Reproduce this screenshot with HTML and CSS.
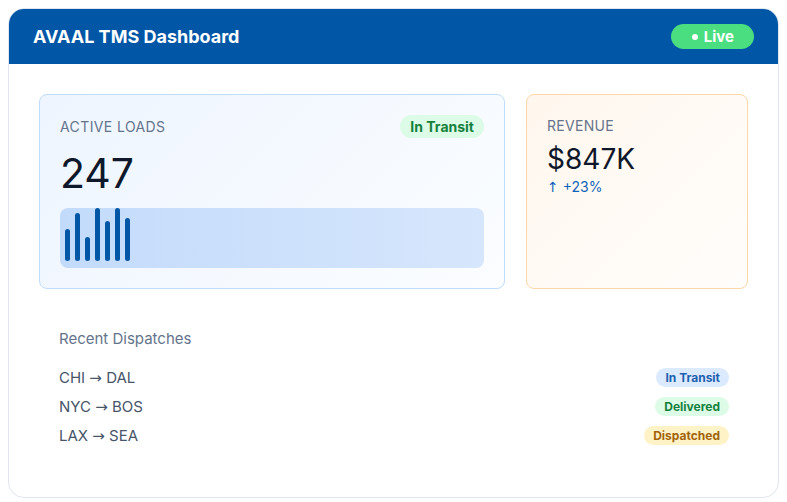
FILE: index.html
```html
<!DOCTYPE html>
<html lang="en">
<head>
<meta charset="utf-8">
<title>AVAAL TMS Dashboard</title>
<link rel="stylesheet" href="styles.css">
</head>
<body>
<div class="dash">
  <header class="dash-header">
    <h1 class="dash-title">AVAAL TMS Dashboard</h1>
    <span class="live"><span class="live-dot"></span>Live</span>
  </header>
  <main class="dash-body">
    <div class="cards">
      <section class="card card-loads">
        <div class="card-top">
          <span class="card-label">ACTIVE LOADS</span>
          <span class="pill-lg">In Transit</span>
        </div>
        <div class="big-num">247</div>
        <div class="chart">
          <span class="bar" style="height:32px"></span>
          <span class="bar" style="height:48px"></span>
          <span class="bar" style="height:24px"></span>
          <span class="bar" style="height:53px"></span>
          <span class="bar" style="height:40px"></span>
          <span class="bar" style="height:53px"></span>
          <span class="bar" style="height:43px"></span>
        </div>
      </section>
      <section class="card card-rev">
        <div class="card-label rev-label">REVENUE</div>
        <div class="rev-num">$847K</div>
        <div class="rev-delta"><span class="arrow">↑</span> +23%</div>
      </section>
    </div>
    <section class="recent">
      <h2 class="recent-title">Recent Dispatches</h2>
      <ul class="rows">
        <li class="row"><span class="route">CHI <span class="arrow">→</span> DAL</span><span class="tag tag-transit">In Transit</span></li>
        <li class="row"><span class="route">NYC <span class="arrow">→</span> BOS</span><span class="tag tag-delivered">Delivered</span></li>
        <li class="row"><span class="route">LAX <span class="arrow">→</span> SEA</span><span class="tag tag-dispatched">Dispatched</span></li>
      </ul>
    </section>
  </main>
</div>
</body>
</html>
```
FILE: styles.css
```css
* { box-sizing: border-box; }
html, body { background: #ffffff; }
body {
  margin: 8px;
  font-family: Inter, "Noto Sans", "Liberation Sans", sans-serif;
  color: #0f172a;
}
.dash {
  border: 1px solid #dfe6ef;
  border-radius: 16px;
  overflow: hidden;
  background: #fff;
}
.dash-header {
  background: #0156a6;
  display: flex;
  align-items: center;
  justify-content: space-between;
  padding: 0 24px 0 24px;
  height: 55px;
}
.dash-title {
  margin: 0;
  color: #fff;
  font-size: 18px;
  font-weight: 700;
  line-height: 22px;
}
.live {
  display: inline-flex;
  align-items: center;
  background: #4ade80;
  color: #fff;
  font-weight: 700;
  font-size: 15px;
  line-height: 17px;
  padding: 4px 20px 4px 21px;
  border-radius: 999px;
}
.live-dot {
  width: 6px;
  height: 6px;
  border-radius: 50%;
  background: #fff;
  margin-right: 6px;
}
.dash-body {
  padding: 30px 30px 32px 30px;
}
.cards {
  display: grid;
  grid-template-columns: 466px 222px;
  column-gap: 21px;
}
.card {
  border-radius: 8px;
  padding: 20px;
}
.card-loads {
  border: 1px solid #bfdcfb;
  background: linear-gradient(135deg, #eef5ff 0%, #fbfdff 100%);
}
.card-rev {
  border: 1px solid #fed7a8;
  background: linear-gradient(135deg, #fff7ee 0%, #fffdfb 100%);
}
.card-top {
  display: flex;
  align-items: center;
  justify-content: space-between;
}
.card-label {
  font-size: 14px;
  color: #64748b;
  letter-spacing: 0.4px;
  line-height: 20px;
}
.pill-lg {
  background: #dcfce7;
  color: #15803d;
  font-weight: 700;
  font-size: 14px;
  line-height: 17px;
  padding: 3px 10px;
  border-radius: 999px;
}
.big-num {
  margin-top: 13px;
  font-size: 41px;
  line-height: 44px;
  font-weight: 400;
  color: #0f172a;
}
.chart {
  margin-top: 13px;
  height: 60px;
  border-radius: 8px;
  background: linear-gradient(90deg, #c3dbfb 0%, #d6e6fc 100%);
  display: flex;
  align-items: flex-end;
  gap: 5px;
  padding: 0 5px 7px 5px;
}
.bar {
  width: 5px;
  background: #0156a6;
  border-radius: 3px;
}
.rev-label { letter-spacing: 0.3px; line-height: 18px; margin-top: 2px; }
.rev-num {
  margin-top: 6px;
  font-size: 28px;
  line-height: 36px;
  color: #0f172a;
}
.rev-delta {
  font-size: 14px;
  line-height: 20px;
  color: #0e63b8;
}
.arrow {
  font-family: "Noto Sans", "DejaVu Sans", sans-serif;
}
.recent {
  margin-top: 20px;
  padding: 20px 19px 16px 20px;
}
.recent-title {
  margin: 0;
  font-size: 15px;
  font-weight: 400;
  line-height: 20px;
  color: #64748b;
}
.rows {
  list-style: none;
  margin: 13px 0 0 0;
  padding: 0;
}
.row {
  height: 29px;
  display: flex;
  align-items: center;
  justify-content: space-between;
}
.route {
  font-size: 15px;
  color: #475569;
}
.tag {
  font-size: 12px;
  font-weight: 700;
  line-height: 15px;
  padding: 2px 9px;
  border-radius: 999px;
  margin-top: 1px;
}
.tag-transit { background: #dbeafe; color: #1d5fae; }
.tag-delivered { background: #dcfce7; color: #15803d; }
.tag-dispatched { background: #fef3c7; color: #a16207; }
```
